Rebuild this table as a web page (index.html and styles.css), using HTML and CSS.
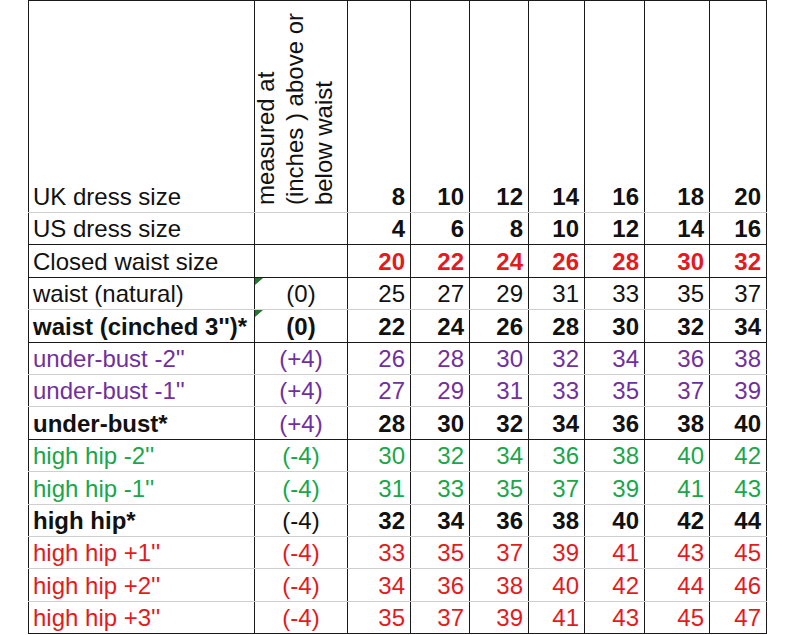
FILE: index.html
```html
<!DOCTYPE html>
<html>
<head>
<meta charset="utf-8">
<link rel="stylesheet" href="styles.css">
</head>
<body>
<table class="sizes">
  <colgroup>
    <col class="c-label"><col class="c-meas"><col class="c-8"><col class="c-10"><col class="c-12"><col class="c-14"><col class="c-16"><col class="c-18"><col class="c-20">
  </colgroup>
  <tr class="head gray">
    <td class="label">UK dress size</td>
    <td class="meas"><div class="rot">measured at<br>(inches ) above or<br>below waist</div></td>
    <td class="b">8</td><td class="b">10</td><td class="b">12</td><td class="b">14</td><td class="b">16</td><td class="b">18</td><td class="b">20</td>
  </tr>
  <tr class="row black">
    <td class="label">US dress size</td>
    <td class="meas"></td>
    <td class="b">4</td><td class="b">6</td><td class="b">8</td><td class="b">10</td><td class="b">12</td><td class="b">14</td><td class="b">16</td>
  </tr>
  <tr class="row black red-n">
    <td class="label blk">Closed waist size</td>
    <td class="meas"></td>
    <td class="b">20</td><td class="b">22</td><td class="b">24</td><td class="b">26</td><td class="b">28</td><td class="b">30</td><td class="b">32</td>
  </tr>
  <tr class="row gray">
    <td class="label">waist (natural)</td>
    <td class="meas flag">(0)</td>
    <td>25</td><td>27</td><td>29</td><td>31</td><td>33</td><td>35</td><td>37</td>
  </tr>
  <tr class="row black bold">
    <td class="label">waist (cinched 3'')*</td>
    <td class="meas flag">(0)</td>
    <td>22</td><td>24</td><td>26</td><td>28</td><td>30</td><td>32</td><td>34</td>
  </tr>
  <tr class="row gray purple">
    <td class="label">under-bust -2''</td>
    <td class="meas">(+4)</td>
    <td>26</td><td>28</td><td>30</td><td>32</td><td>34</td><td>36</td><td>38</td>
  </tr>
  <tr class="row gray purple">
    <td class="label">under-bust -1''</td>
    <td class="meas">(+4)</td>
    <td>27</td><td>29</td><td>31</td><td>33</td><td>35</td><td>37</td><td>39</td>
  </tr>
  <tr class="row black">
    <td class="label b">under-bust*</td>
    <td class="meas purple">(+4)</td>
    <td class="b">28</td><td class="b">30</td><td class="b">32</td><td class="b">34</td><td class="b">36</td><td class="b">38</td><td class="b">40</td>
  </tr>
  <tr class="row gray green">
    <td class="label">high hip -2''</td>
    <td class="meas">(-4)</td>
    <td>30</td><td>32</td><td>34</td><td>36</td><td>38</td><td>40</td><td>42</td>
  </tr>
  <tr class="row gray green">
    <td class="label">high hip -1''</td>
    <td class="meas">(-4)</td>
    <td>31</td><td>33</td><td>35</td><td>37</td><td>39</td><td>41</td><td>43</td>
  </tr>
  <tr class="row gray">
    <td class="label b">high hip*</td>
    <td class="meas">(-4)</td>
    <td class="b">32</td><td class="b">34</td><td class="b">36</td><td class="b">38</td><td class="b">40</td><td class="b">42</td><td class="b">44</td>
  </tr>
  <tr class="row gray red">
    <td class="label">high hip +1''</td>
    <td class="meas">(-4)</td>
    <td>33</td><td>35</td><td>37</td><td>39</td><td>41</td><td>43</td><td>45</td>
  </tr>
  <tr class="row gray red">
    <td class="label">high hip +2''</td>
    <td class="meas">(-4)</td>
    <td>34</td><td>36</td><td>38</td><td>40</td><td>42</td><td>44</td><td>46</td>
  </tr>
  <tr class="row black red">
    <td class="label">high hip +3''</td>
    <td class="meas">(-4)</td>
    <td>35</td><td>37</td><td>39</td><td>41</td><td>43</td><td>45</td><td>47</td>
  </tr>
</table>
</body>
</html>
```

FILE: styles.css
```css
html, body {
  margin: 0;
  padding: 0;
  background: #ffffff;
}

body {
  font-family: "Liberation Sans", Arial, sans-serif;
  color: #111111;
}

.sizes {
  margin-left: 28px;
  border-collapse: collapse;
  table-layout: fixed;
  width: 739px;
  font-size: 24px;
  line-height: 26px;
}

.c-label { width: 226px; }
.c-meas { width: 93px; }
.c-8 { width: 63px; }
.c-10 { width: 59px; }
.c-12 { width: 59px; }
.c-14 { width: 56px; }
.c-16 { width: 60px; }
.c-18 { width: 65px; }
.c-20 { width: 57px; }

.sizes td {
  border-left: 1px solid #1a1a1a;
  border-right: 1px solid #1a1a1a;
  padding: 0 5px 2px 5px;
  vertical-align: bottom;
  text-align: right;
  white-space: nowrap;
  overflow: visible;
}

.sizes tr:first-child td {
  border-top: 1px solid #1a1a1a;
}

.sizes tr.gray td {
  border-bottom: 1px solid #cfcfcf;
}

.sizes tr.black td {
  border-bottom: 1px solid #1a1a1a;
}

.head {
  height: 212px;
}

.row {
  height: 32.4px;
}

.sizes td.label {
  text-align: left;
  padding-left: 4px;
}

.sizes td.meas {
  text-align: center;
  position: relative;
}

.rot {
  writing-mode: vertical-rl;
  transform: rotate(180deg);
  text-align: left;
  line-height: 29px;
  margin: 0 0 5px -9px;
}

.flag::before {
  content: "";
  position: absolute;
  left: 0;
  top: 0;
  width: 0;
  height: 0;
  border-top: 7px solid #1f7a2e;
  border-right: 8px solid transparent;
}

.b,
.bold td {
  font-weight: bold;
}

.red-n td {
  color: #e31b1e;
}

.red-n td.blk {
  color: #111111;
}

.red td {
  color: #e31b1e;
}

.purple td,
.sizes td.purple {
  color: #7030a0;
}

.green td {
  color: #1aa64a;
}
```
